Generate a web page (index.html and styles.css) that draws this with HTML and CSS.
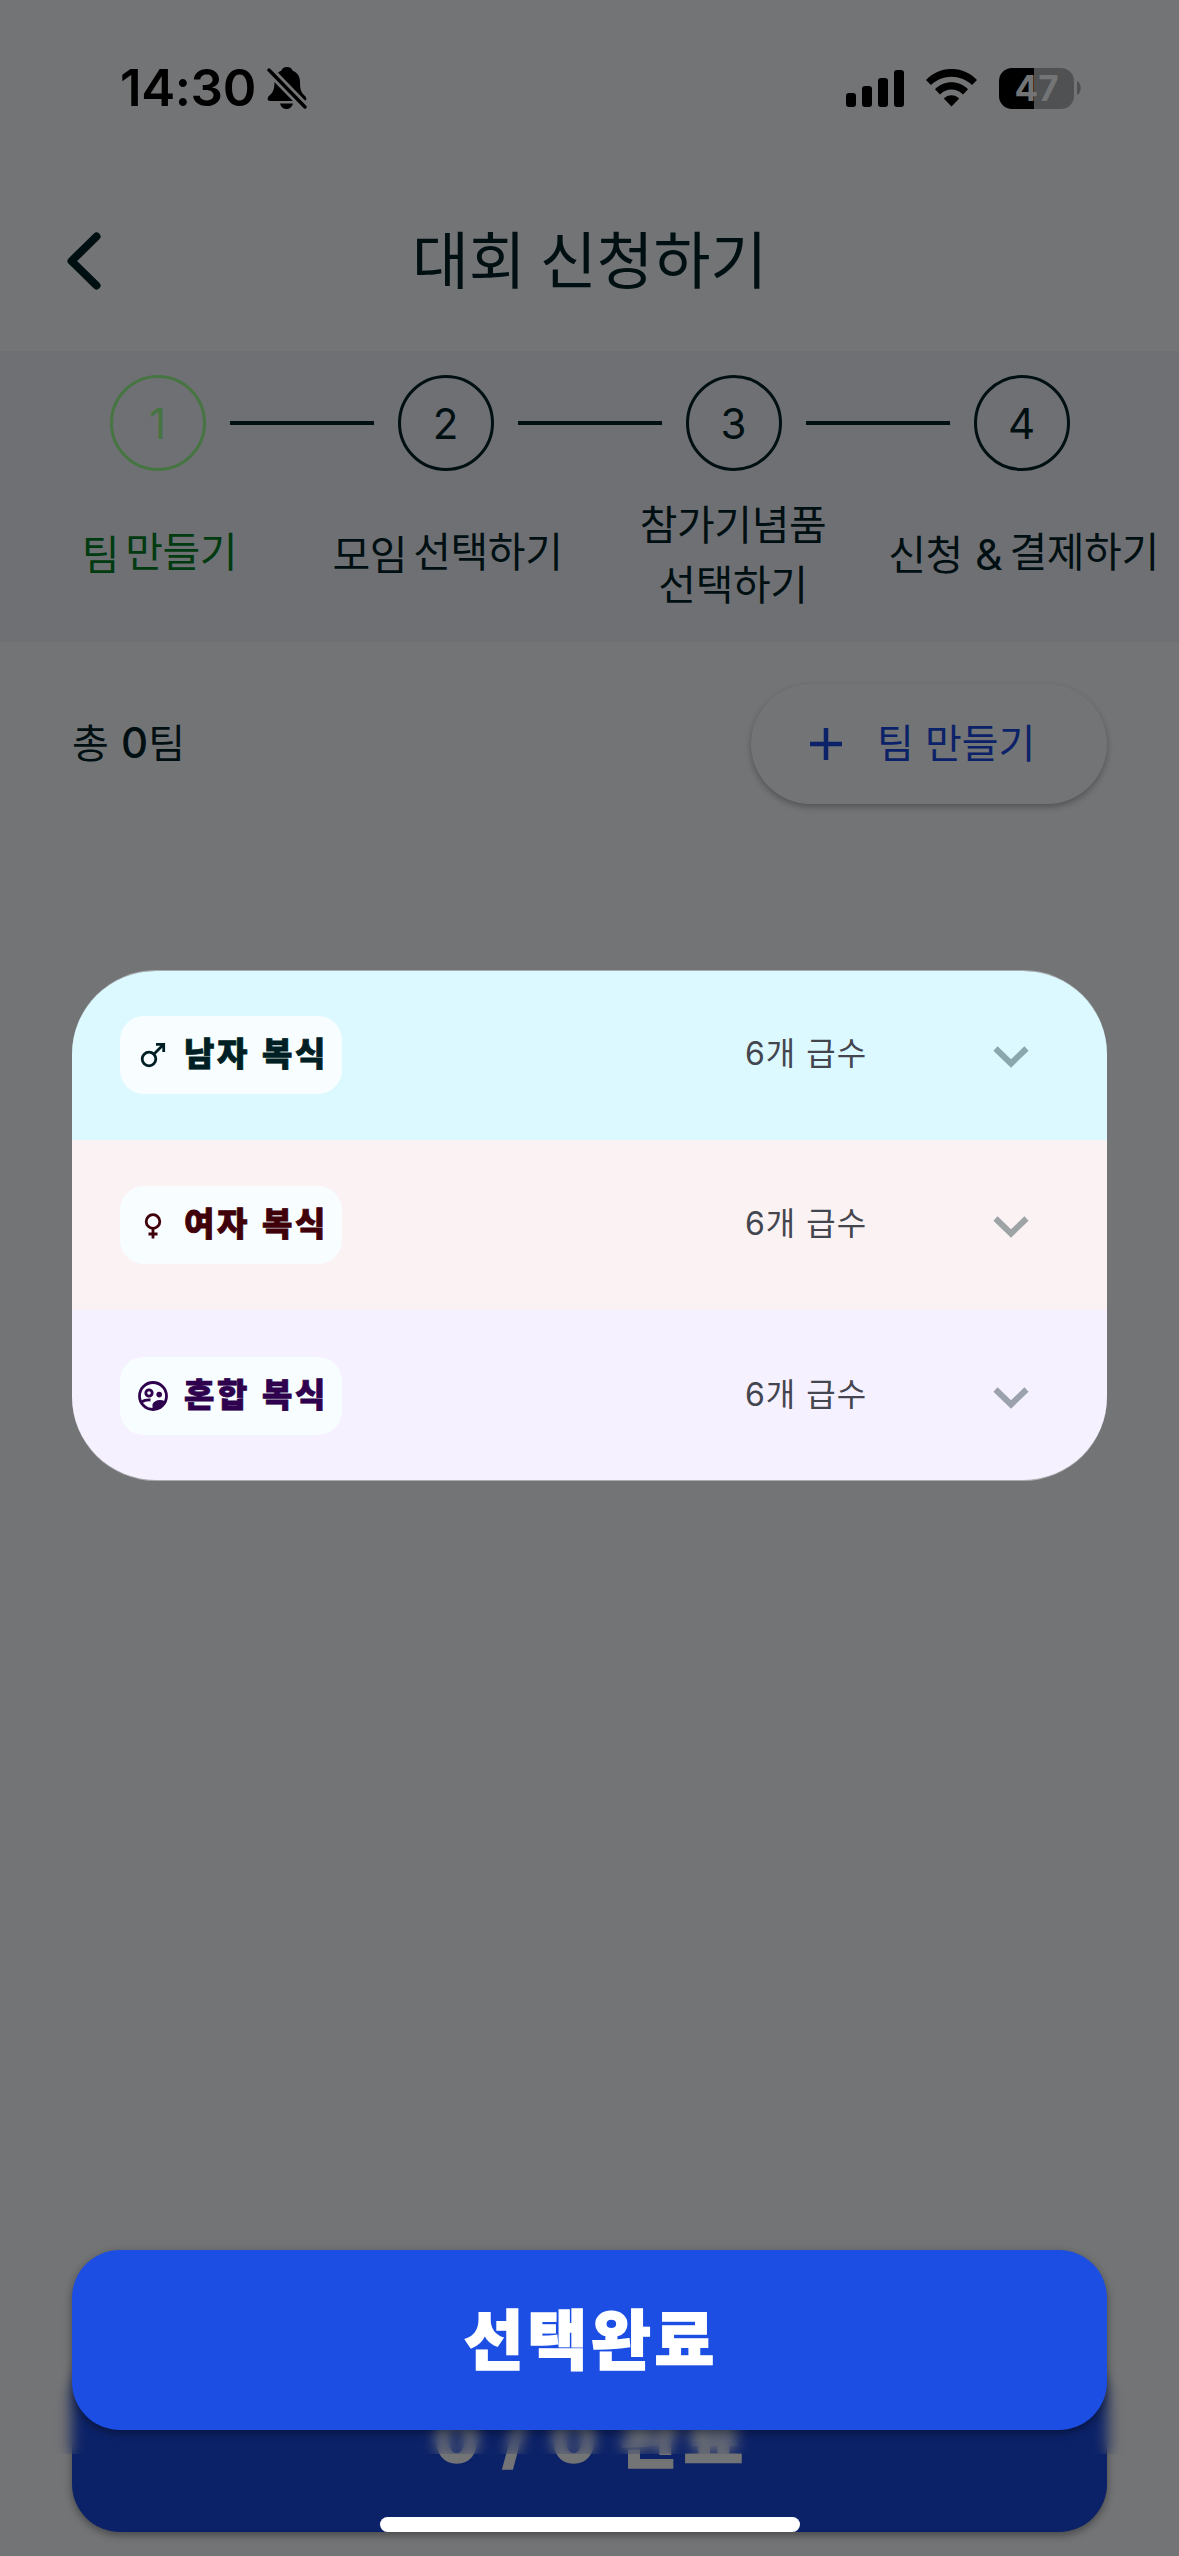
FILE: index.html
```html
<!DOCTYPE html>
<html lang="ko">
<head>
<meta charset="utf-8">
<title>대회 신청하기</title>
<link rel="stylesheet" href="styles.css">
</head>
<body>
<div class="screen">
  <header class="status">
    <span class="clock">14:30</span>
    <svg class="bell" width="40" height="44" viewBox="0 0 40 44">
      <path d="M20 1c-3 0-5 1.500-5.700 3.700C9.500 6.500 7.500 10.500 7.500 16c0 8-2 11-5.500 14-2 2-2 5 1.500 5h33c3.500 0 3.500-3 1.500-5-3.500-3-5-6-5-14 0-5.500-2.500-9.500-7.300-11.300C25 2.500 23 1 20 1z"/>
      <path d="M13 37.500h13c-.8 3.500-3.200 5.500-6.500 5.500s-5.800-2-6.500-5.500z"/>
      <path class="bell-gap" d="M2 4L38 41"/>
      <path class="bell-slash" d="M2 4L38 41"/>
    </svg>
    <span class="status-spacer"></span>
    <svg class="signal" width="58" height="37" viewBox="0 0 58 37">
      <rect x="0" y="23" width="10" height="14" rx="3"/>
      <rect x="16" y="16" width="10" height="21" rx="3"/>
      <rect x="32" y="8" width="10" height="29" rx="3"/>
      <rect x="48" y="0" width="10" height="37" rx="3"/>
    </svg>
    <svg class="wifi" width="51" height="38" viewBox="0 0 51 38">
      <path d="M0 11C14-3.700 37-3.700 51 11L46 16C34.500 5 16.500 5 5 16z"/>
      <path d="M9 20.300C18 11 33 11 42 20.300L37 25.400C30.500 19 20.500 19 14 25.400z"/>
      <path d="M17.800 29.500C22 25 29 25 33.200 29.500L25.500 37.500z"/>
    </svg>
    <div class="battery"><span>47</span></div>
    <svg class="battery-tip" width="4" height="14" viewBox="0 0 4 14"><path d="M0 0C5 2 5 12 0 14z"/></svg>
  </header>

  <nav class="titlebar">
    <svg class="back" width="34" height="58" viewBox="0 0 34 58"><path d="M29.500 4.500L4.500 29L29.500 53.500"/></svg>
    <h1>대회 신청하기</h1>
  </nav>

  <section class="steps">
    <div class="track">
      <span class="dot active">1</span><i></i>
      <span class="dot">2</span><i></i>
      <span class="dot">3</span><i></i>
      <span class="dot">4</span>
    </div>
    <div class="labels">
      <p class="active">팀 <span class="raised">만들기</span></p>
      <p>모임 <span class="raised">선택하기</span></p>
      <p class="two">참가기념품<br>선택하기</p>
      <p>신청 <b>&amp;</b> <span class="raised">결제하기</span></p>
    </div>
  </section>

  <section class="summary">
    <p>총 <b>0</b>팀</p>
    <button class="add">
      <svg width="32" height="32" viewBox="0 0 32 32"><path d="M16 0v32M0 16h32"/></svg>
      <span>팀 만들기</span>
    </button>
  </section>

  <button class="cta under">0 / 0 완료</button>

  <div class="modal">
    <ul class="card">
      <li class="male">
        <span class="chip">
          <svg width="36" height="36" viewBox="0 0 36 36"><circle cx="14" cy="22" r="6.800"/><path d="M19 17L28 8M21 7.300H28.700V15"/></svg>
          <span>남자 복식</span>
        </span>
        <span class="count">6개 급수</span>
        <svg class="chev" width="36" height="24" viewBox="0 0 36 24"><path d="M2.500 3.500L18 18.500L33.500 3.500"/></svg>
      </li>
      <li class="female">
        <span class="chip">
          <svg width="36" height="36" viewBox="0 0 36 36"><circle cx="18" cy="14.500" r="6.800"/><path d="M18 21.500V31.500M13.500 27H22.500"/></svg>
          <span>여자 복식</span>
        </span>
        <span class="count">6개 급수</span>
        <svg class="chev" width="36" height="24" viewBox="0 0 36 24"><path d="M2.500 3.500L18 18.500L33.500 3.500"/></svg>
      </li>
      <li class="mixed">
        <span class="chip">
          <svg width="36" height="36" viewBox="0 0 36 36"><circle cx="18" cy="18" r="13.500"/><circle cx="14" cy="15" r="3.200"/><circle class="solid" cx="24.200" cy="16.600" r="2.800"/><path d="M6.500 24C9 22.200 12 21.800 15.500 22"/><path class="solid" d="M17.500 31.500V26.500C18.500 23.500 21.500 22 25 22S30 23 31 24C29 29 24 32.500 17.500 31.500z"/></svg>
          <span>혼합 복식</span>
        </span>
        <span class="count">6개 급수</span>
        <svg class="chev" width="36" height="24" viewBox="0 0 36 24"><path d="M2.500 3.500L18 18.500L33.500 3.500"/></svg>
      </li>
    </ul>
    <div class="dock"><button class="cta">선택완료</button></div>
  </div>
  <div class="home"></div>
</div>
</body>
</html>
```

FILE: styles.css
```css
* { box-sizing: border-box; margin: 0; padding: 0; }
body { background: #737476; }
.screen {
  position: relative;
  display: flex;
  flex-direction: column;
  width: 1179px;
  height: 2556px;
  overflow: hidden;
  background: #737476;
  color: #000f12;
  font-family: "Noto Sans CJK KR", sans-serif;
}
button { border: 0; font-family: inherit; }

.status {
  display: flex;
  align-items: center;
  height: 176px;
  padding: 0 98px 0 120px;
  color: #000;
}
.clock {
  width: 147px;
  font: 600 51px/60px Inter, sans-serif;
  letter-spacing: -.4px;
  white-space: nowrap;
}
.bell-gap { stroke: #737476; stroke-width: 9; }
.bell-slash { stroke: #000; stroke-width: 3.4; stroke-linecap: round; }
.status-spacer { flex: 1; }
.wifi { margin: 0 22px; }
.battery {
  width: 75px;
  height: 41px;
  margin-right: 3px;
  border-radius: 13px;
  background: linear-gradient(90deg, #000 35px, #505153 35px);
  color: #737476;
  font: 700 35px/40px Inter, sans-serif;
  text-align: center;
}
.battery-tip { fill: #505153; }

.titlebar {
  display: grid;
  grid-template-columns: 67px 1fr 67px;
  align-items: center;
  height: 175px;
  padding-bottom: 6px;
}
.back {
  margin-left: 67px;
  margin-top: 1px;
  fill: none;
  stroke: #000f12;
  stroke-width: 8;
  stroke-linecap: round;
  stroke-linejoin: round;
}
h1 {
  padding-bottom: 8px;
  font-size: 62px;
  line-height: 90px;
  font-weight: 400;
  letter-spacing: -.2px;
  word-spacing: -3px;
  text-align: center;
}

.steps { height: 291px; padding-top: 24px; background: #6f7074; }
.track { display: flex; align-items: center; gap: 24px; padding-left: 109.5px; }
.track i { width: 144px; height: 4px; background: #000f12; }
.dot {
  width: 96px;
  height: 96px;
  border: 3px solid #000f12;
  border-radius: 50%;
  font: 400 42px/91px Inter, sans-serif;
  text-align: center;
}
.dot.active { border-color: #467542; color: #467542; }
.labels {
  display: grid;
  grid-template-columns: repeat(4, 288px);
  align-items: center;
  height: 171px;
  padding: 0 0 10px 13px;
  font-size: 41px;
  line-height: 60px;
  letter-spacing: -.4px;
  text-align: center;
  white-space: nowrap;
}
.labels p { padding-left: 5px; word-spacing: -5px; }
.labels .two { padding-left: 0; }
.labels .active { color: #003a10; }
.labels b { margin: 0 1px 0 6px; font: 400 43px/1 Inter, sans-serif; }
.raised { vertical-align: 3px; line-height: 1; }

.summary {
  display: flex;
  align-items: center;
  justify-content: space-between;
  height: 120px;
  margin: 42px 72px 0;
  font-size: 40px;
}
.summary p, .add span { padding-bottom: 7px; }
.summary b { margin-left: 1px; font: 450 42px/1 Inter, sans-serif; }
.add {
  display: flex;
  align-items: center;
  gap: 35px;
  width: 356px;
  height: 120px;
  padding-left: 59px;
  border-radius: 60px;
  background: #737476;
  box-shadow: 0 3px 6px rgba(0, 0, 0, .28);
  color: #0c2268;
  font-size: 40px;
}
.add svg { stroke: currentColor; stroke-width: 4.5; }

.cta {
  display: block;
  width: 1035px;
  height: 180px;
  padding: 0 0 7px 3px;
  border-radius: 48px;
  background: #1c4ee4;
  box-shadow: 0 3px 9px rgba(0, 0, 0, .4);
  color: #fff;
  font-size: 65px;
  line-height: 173px;
  font-weight: 900;
  letter-spacing: 3.800px;
  text-align: center;
  -webkit-text-stroke: 1.500px currentColor;
}
.cta.under {
  margin: auto 72px 24px;
  background: #0c2268;
  color: #737476;
  font-family: Inter, "Noto Sans CJK KR", sans-serif;
  font-weight: 800;
  letter-spacing: 4.400px;
}

.modal {
  position: absolute;
  inset: 0;
  display: flex;
  flex-direction: column;
  justify-content: space-between;
  padding: 970px 0 102px;
}
.card {
  margin: 0 72px;
  border: 1px solid #a9abae;
  border-width: 1px 0;
  border-radius: 84px;
  overflow: hidden;
  list-style: none;
}
.card li {
  display: flex;
  align-items: flex-start;
  height: 170px;
  padding: 46px 78px 0 48px;
}
.card .male { height: 169px; padding-top: 45px; background: #dbf9ff; color: #001f25; }
.card .female { background: #fbf2f3; color: #3f000a; }
.card .mixed { padding-top: 47px; background: #f6f1fe; color: #2e004d; }
.chip {
  display: flex;
  align-items: center;
  gap: 13px;
  width: 222px;
  height: 78px;
  padding-left: 15px;
  border-radius: 24px;
  background: #f8fdff;
  font-size: 33px;
  line-height: 70px;
  font-weight: 900;
  letter-spacing: 2.700px;
  white-space: nowrap;
}
.chip span { padding-bottom: 6px; -webkit-text-stroke: .8px currentColor; }
.chip svg { flex: none; fill: none; stroke: currentColor; stroke-width: 2.800; }
.chip .solid { fill: currentColor; stroke: none; }
.count {
  margin-left: auto;
  width: 121px;
  color: #44464f;
  font: 400 32px/76px Inter, "Noto Sans CJK KR", sans-serif;
  letter-spacing: 1px;
  white-space: nowrap;
}
.chev {
  margin: 29px 0 0 127px;
  fill: none;
  stroke: rgba(0, 27, 35, .37);
  stroke-width: 6;
}
.dock {
  height: 228px;
  padding: 24px 72px;
  backdrop-filter: blur(7px);
}
.home {
  position: absolute;
  left: 380px;
  bottom: 24px;
  width: 420px;
  height: 15px;
  border-radius: 8px;
  background: #fff;
}
```
